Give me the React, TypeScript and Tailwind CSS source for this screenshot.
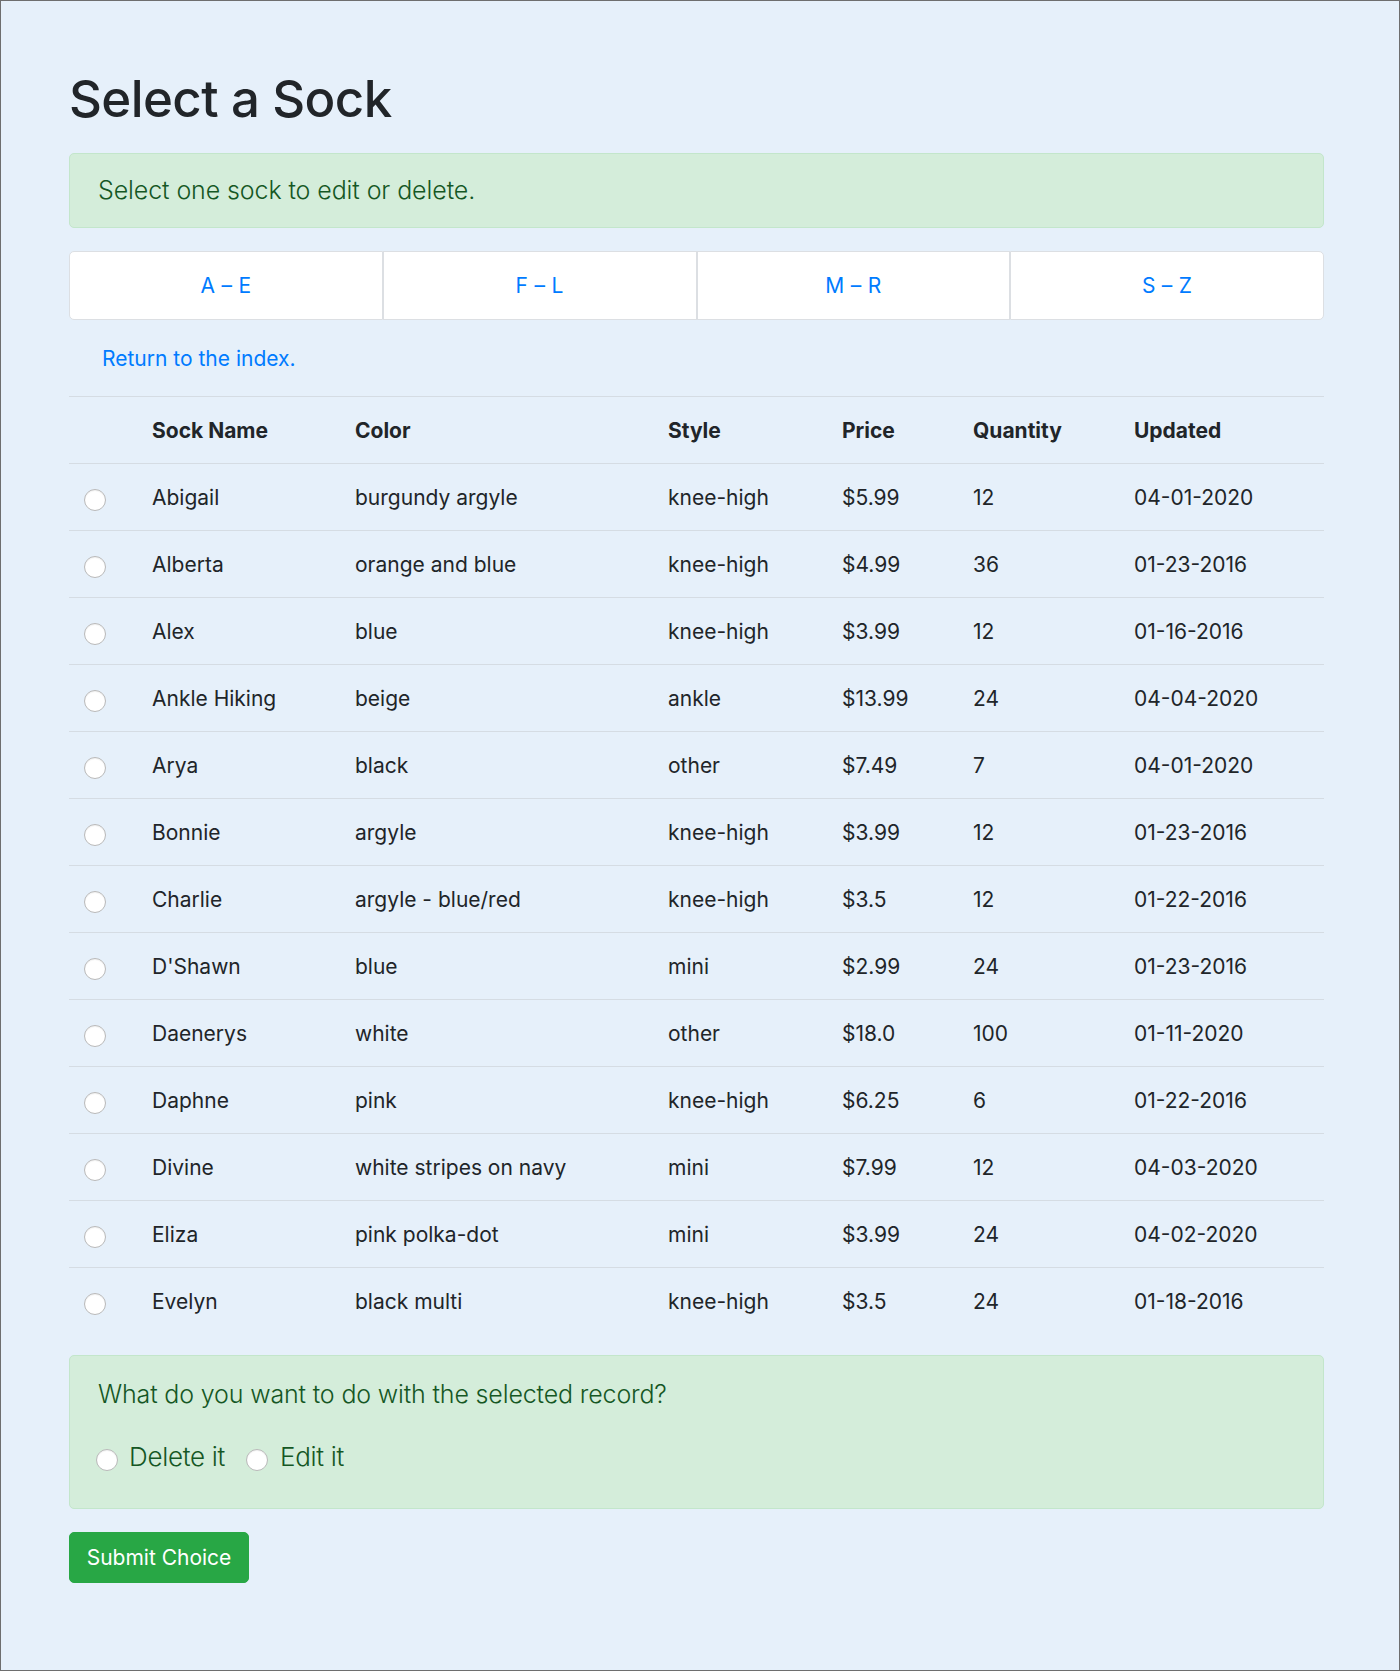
const socks = [
  { name: 'Abigail', color: 'burgundy argyle', style: 'knee-high', price: '$5.99', qty: '12', updated: '04-01-2020' },
  { name: 'Alberta', color: 'orange and blue', style: 'knee-high', price: '$4.99', qty: '36', updated: '01-23-2016' },
  { name: 'Alex', color: 'blue', style: 'knee-high', price: '$3.99', qty: '12', updated: '01-16-2016' },
  { name: 'Ankle Hiking', color: 'beige', style: 'ankle', price: '$13.99', qty: '24', updated: '04-04-2020' },
  { name: 'Arya', color: 'black', style: 'other', price: '$7.49', qty: '7', updated: '04-01-2020' },
  { name: 'Bonnie', color: 'argyle', style: 'knee-high', price: '$3.99', qty: '12', updated: '01-23-2016' },
  { name: 'Charlie', color: 'argyle - blue/red', style: 'knee-high', price: '$3.5', qty: '12', updated: '01-22-2016' },
  { name: "D'Shawn", color: 'blue', style: 'mini', price: '$2.99', qty: '24', updated: '01-23-2016' },
  { name: 'Daenerys', color: 'white', style: 'other', price: '$18.0', qty: '100', updated: '01-11-2020' },
  { name: 'Daphne', color: 'pink', style: 'knee-high', price: '$6.25', qty: '6', updated: '01-22-2016' },
  { name: 'Divine', color: 'white stripes on navy', style: 'mini', price: '$7.99', qty: '12', updated: '04-03-2020' },
  { name: 'Eliza', color: 'pink polka-dot', style: 'mini', price: '$3.99', qty: '24', updated: '04-02-2020' },
  { name: 'Evelyn', color: 'black multi', style: 'knee-high', price: '$3.5', qty: '24', updated: '01-18-2016' },
];

const tabs = ['A – E', 'F – L', 'M – R', 'S – Z'];

const cols = 'grid grid-cols-[66px_203px_313px_174px_131px_161px_207px]';

function Radio() {
  return (
    <span className="block w-[22px] h-[22px] rounded-full bg-white border border-[#b9b9b9] shadow-[inset_0_1px_1px_rgba(0,0,0,0.06)]" />
  );
}

export default function App() {
  return (
    <div
      className="w-[1400px] h-[1671px] border border-[#6e6e6e] bg-[#e6f0fa] text-[#212529] overflow-hidden"
      style={{ fontFamily: 'Inter, "Liberation Sans", sans-serif' }}
    >
      <div className="ml-[68px] w-[1255px]">
        <h1 className="mt-[65px] h-[65px] leading-[65px] text-[51px] font-medium tracking-[-0.6px]">Select a Sock</h1>

        {/* Top alert */}
        <div className="mt-[22px] h-[75px] flex items-center px-[28px] rounded-[5px] border border-[#c3e6cb] bg-[#d4edda] text-[#155724] text-[25px] tracking-[-0.1px] font-light">
          Select one sock to edit or delete.
        </div>

        {/* Letter tabs */}
        <div className="mt-[23px] grid grid-cols-4 h-[69px]">
          {tabs.map((t, i) => (
            <div
              key={t}
              className={
                'flex items-center justify-center bg-white border border-[#dcdfe3] text-[#007bff] text-[21px] tracking-[0.3px] ' +
                (i === 0 ? 'rounded-l-[5px]' : '') +
                (i === 3 ? 'rounded-r-[5px]' : '')
              }
            >
              {t}
            </div>
          ))}
        </div>

        <div className="mt-[24px] h-[30px] leading-[30px] pl-[33px] text-[21px] text-[#007bff]">Return to the index.</div>

        {/* Table */}
        <div className="mt-[22px]">
          <div className={cols + ' h-[67px] items-center pt-[2px] border-t border-[#d5dce3] font-bold text-[21px]'}>
            <div />
            <div className="px-[17px]">Sock Name</div>
            <div className="px-[17px]">Color</div>
            <div className="px-[17px]">Style</div>
            <div className="px-[17px]">Price</div>
            <div className="px-[17px]">Quantity</div>
            <div className="px-[17px]">Updated</div>
          </div>
          {socks.map((s) => (
            <div key={s.name} className={cols + ' h-[67px] items-center pt-[2px] border-t border-[#d5dce3] text-[21px]'}>
              <div className="pl-[15px] pt-[3px]">
                <Radio />
              </div>
              <div className="px-[17px]">{s.name}</div>
              <div className="px-[17px]">{s.color}</div>
              <div className="px-[17px]">{s.style}</div>
              <div className="px-[17px]">{s.price}</div>
              <div className="px-[17px]">{s.qty}</div>
              <div className="px-[17px]">{s.updated}</div>
            </div>
          ))}
        </div>

        {/* Action alert */}
        <div className="mt-[21px] h-[154px] rounded-[5px] border border-[#c3e6cb] bg-[#d4edda] text-[#155724] px-[28px] pt-[20px]">
          <p className="text-[25px] tracking-[-0.15px] font-light leading-[36px]">What do you want to do with the selected record?</p>
          <div className="mt-[27px] flex items-center text-[26px] tracking-[-0.3px] font-light leading-[36px]">
            <label className="flex items-center">
              <span className="-ml-[2px] mt-[6px]">
                <Radio />
              </span>
              <span className="ml-[11px]">Delete it</span>
            </label>
            <label className="flex items-center ml-[21px]">
              <span className="mt-[6px]">
                <Radio />
              </span>
              <span className="ml-[12px]">Edit it</span>
            </label>
          </div>
        </div>

        <button className="mt-[23px] w-[180px] h-[51px] rounded-[5px] bg-[#28a745] border border-[#28a745] text-white text-[21px]">
          Submit Choice
        </button>
      </div>
    </div>
  );
}
